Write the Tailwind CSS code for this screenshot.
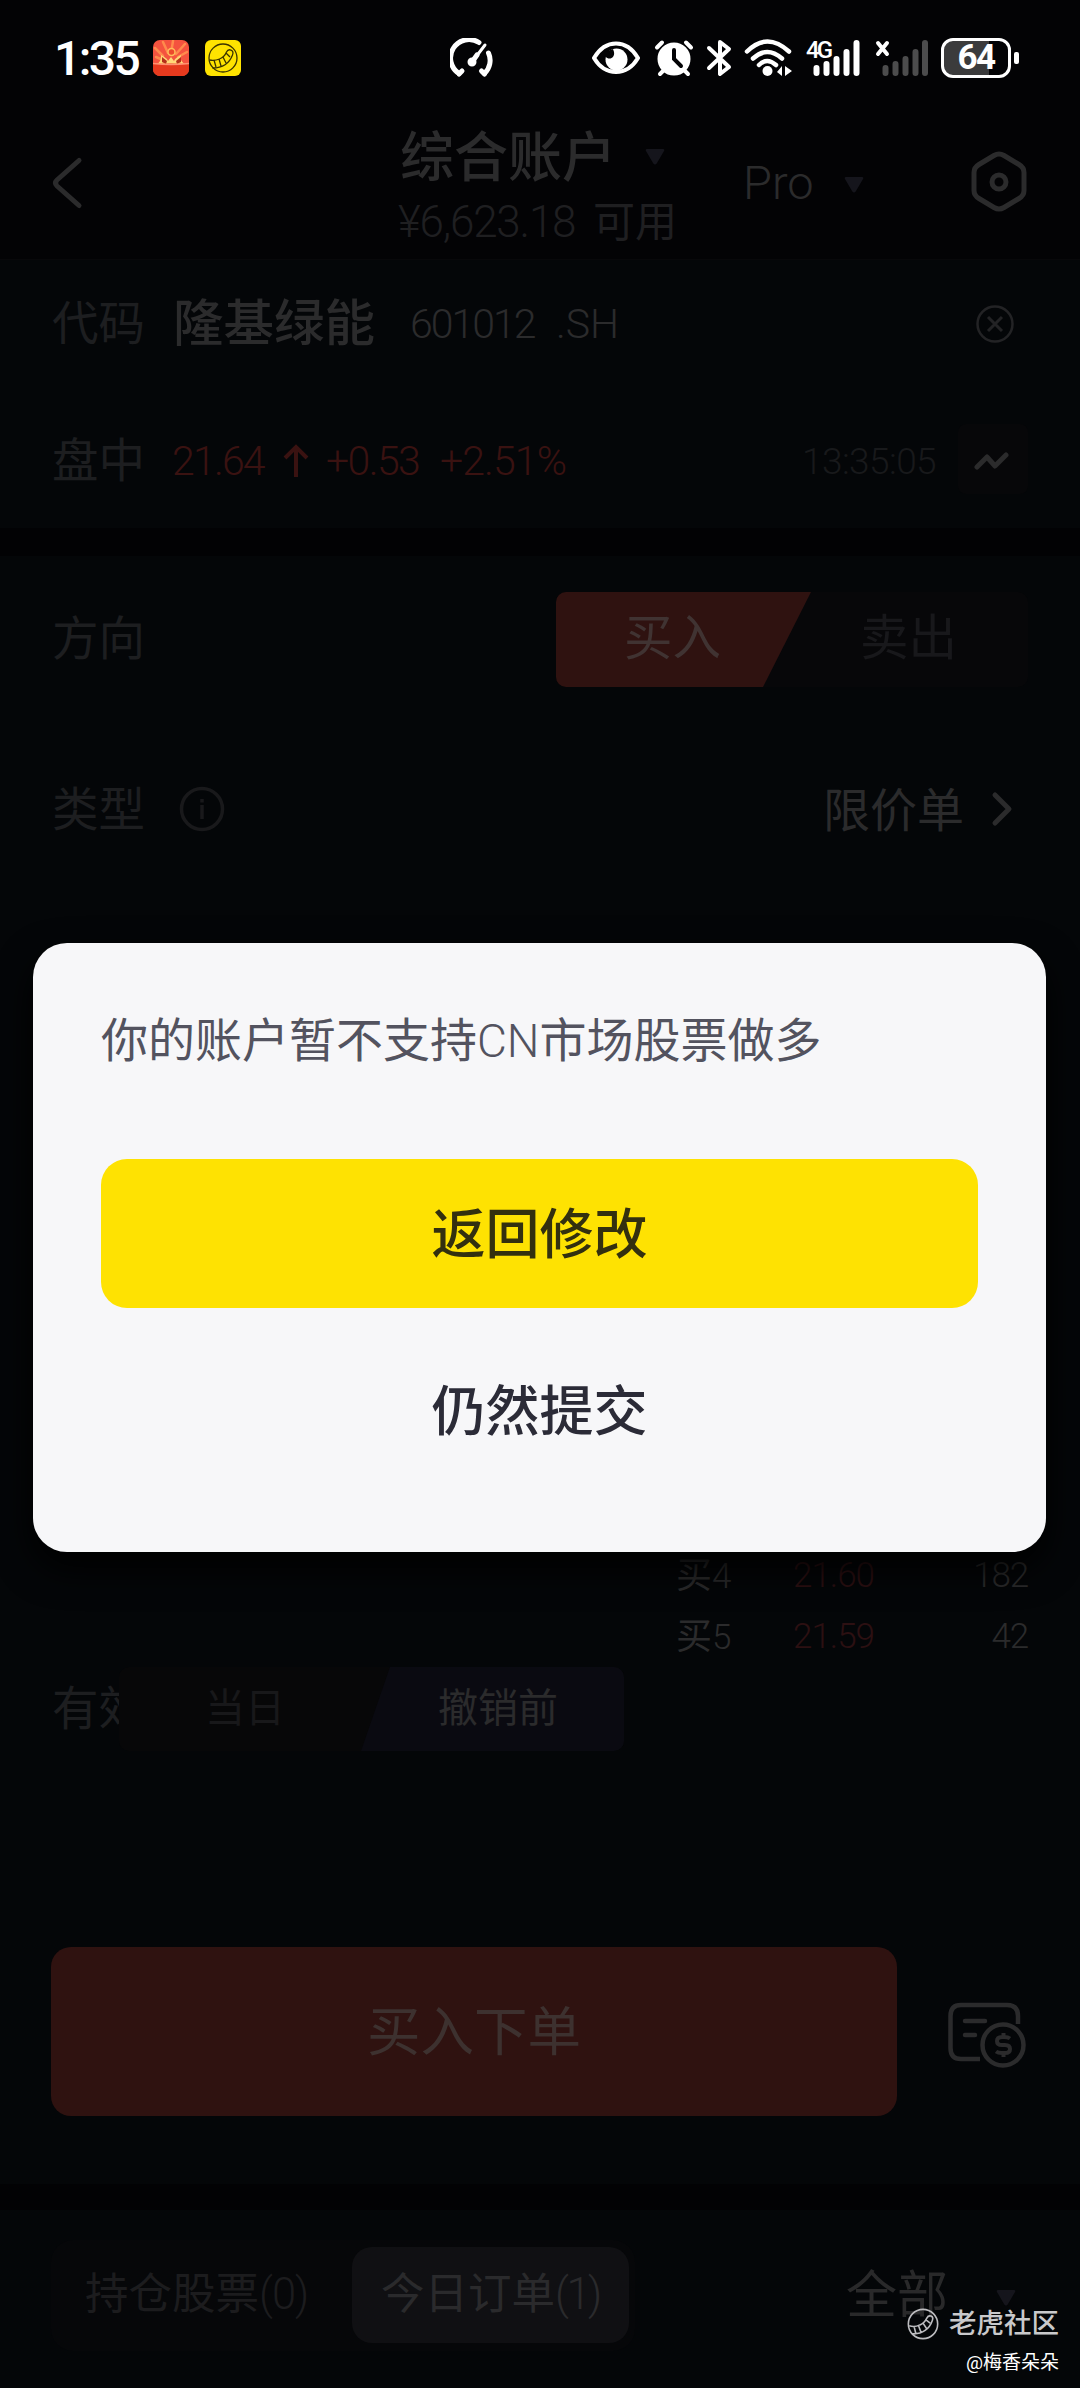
<!DOCTYPE html>
<html lang="zh-CN">
<head>
<meta charset="utf-8">
<title>下单</title>
<script src="https://cdn.jsdelivr.net/npm/@tailwindcss/browser@4"></script>
</head>
<body class="bg-[#040608]">
<div class="relative w-[1080px] h-[2388px] overflow-hidden bg-[#040608] font-[Roboto,'Noto_Sans_CJK_SC',sans-serif] leading-none whitespace-nowrap text-[#2b2b2c] flex flex-col">

  <!-- Status bar -->
  <div class="h-[115px] shrink-0 bg-[#030305] flex items-center text-white">
    <div class="w-[96px] ml-[54px] pt-[2px] text-[48px] font-medium tracking-[-2.600px]">1:35</div>
    <svg class="w-9 h-9 ml-[3px]" viewBox="0 0 36 36">
      <rect width="36" height="36" rx="7" fill="#f4533f"/>
      <path d="M2 8l8 8M10 2l5 11M20 1l-2 12M32 4l-9 10M34 12l-9 5M3 17l7 3" stroke="#ff8a4c" stroke-width="2.500" stroke-linecap="round"/>
      <path d="M3 24c4-1 5-4 5-9 3 2 6 3 7 6l3-4 3 4c1-3 4-4 7-6-1 5 1 8 5 9z" fill="#ffd878"/>
      <circle cx="18.500" cy="12" r="3.500" fill="#ec4a2c" stroke="#ffbd5c" stroke-width="1.500"/>
      <path d="M9 17l5 4-1 3-4-2zM28 17l-5 4 1 3 4-2z" fill="#b5301b"/>
      <path d="M0 24q18-1 36 0v5a7 7 0 0 1-7 7H7a7 7 0 0 1-7-7z" fill="#e63a1e"/>
      <path d="M0 23.500q18 2 36 0" stroke="#ff9070" stroke-width="1.500" fill="none"/>
    </svg>
    <svg class="w-9 h-9 ml-4" viewBox="0 0 36 36" fill="none" stroke="#3a3300" stroke-width="1.300">
      <rect width="36" height="36" rx="6" fill="#fee300" stroke="none"/>
      <circle cx="18" cy="18" r="14"/>
      <path d="M4.500 20q5 1 10-1 5-2 7-7c2-4 8-2 6 3-3 8-9 13-20 13M9 20l2 7M14 19l2 7M18 17l3 6M21 13l4 4"/>
    </svg>
    <svg class="w-[44px] h-[40px] ml-[209px]" viewBox="0 0 44 40" fill="none" stroke="#fff" stroke-width="5" stroke-linecap="round">
      <path d="M9 35.500a18 18 0 0 1 20-31M38.500 15a18 18 0 0 1-4 20.500" />
      <path d="M9 36l3-3M34.500 36l-3-3"/><path d="M22 24l13-17" stroke-width="3"/><path d="M22 24l5-7"/><circle cx="22" cy="24" r="2"/>
    </svg>
    <svg class="w-[48px] h-[34px] ml-[98px]" viewBox="0 0 48 34">
      <path d="M2 17C8 7 16 2.500 24 2.500S40 7 46 17C40 27 32 31 24 31S8 27 2 17z" fill="none" stroke="#fff" stroke-width="4"/>
      <circle cx="24.500" cy="18.500" r="11" fill="#fff"/><path d="M13 15c4 5 10 2 9-4l-1-3-8 3z" fill="#030305"/>
    </svg>
    <svg class="w-[40px] h-[38px] ml-[14px]" viewBox="0 0 40 38" fill="none" stroke="#fff" stroke-width="4" stroke-linecap="round">
      <circle cx="20" cy="20" r="14.500" fill="#fff"/><path d="M3 8.500l5-5M37 8.500l-5-5M6 35l5-5M34 35l-5-5"/><path d="M20 11v9l7 7" stroke="#030305"/>
    </svg>
    <svg class="w-[26px] h-[38px] ml-[12px]" viewBox="0 0 26 38" fill="none" stroke="#fff" stroke-width="4" stroke-linejoin="round" stroke-linecap="round">
      <path d="M3 9l20 19-9 7V3l9 7L3 29"/>
    </svg>
    <svg class="w-[48px] h-[38px] ml-[12px]" viewBox="0 0 48 38" fill="none" stroke="#fff" stroke-width="4.500" stroke-linecap="round">
      <path d="M3 12.500Q23 -7.500 45 12.500M9 19.500q14-13 29 0M15 26q8-8 17 0"/><circle cx="23.500" cy="32" r="5" fill="#fff" stroke="none"/>
      <path d="M38 27v10l-5-4zM41 27v10l7-5zM33 32h4M42 32h4" fill="#fff" stroke="none"/>
    </svg>
    <div class="relative w-[54px] h-[38px] ml-[14px]">
      <svg class="w-full h-full" viewBox="0 0 54 38" stroke="#fff" stroke-width="6" stroke-linecap="round"><path d="M10.500 29v5M20.500 25v9M30.500 20v14M40.500 13v21M50.500 4v30"/></svg>
      <span class="absolute left-0 -top-[1px] text-[24px] font-medium tracking-[-2.800px]">4G</span>
    </div>
    <svg class="w-[56px] h-[38px] ml-[14px]" viewBox="0 0 56 38" stroke="#4c4c4d" stroke-width="6" stroke-linecap="round"><path d="M11.500 29v5M21.500 25v9M31.500 20v14M41.500 13v21M51 4v30"/><path d="M4 4l9 11M13 4L4 15" stroke="#fff" stroke-width="4"/></svg>
    <div class="ml-[11px] w-[70px] h-[40px] rounded-[12px] border-[3px] border-white overflow-hidden bg-linear-to-r from-[#3b3b3c] from-[70%] to-[#030305] to-[70%] flex items-center justify-center text-[35px] font-bold tracking-[-1.500px]">64</div>
    <div class="ml-[3px] w-[5px] h-[12px] rounded-[2px] bg-white"></div>
  </div>

  <!-- Title bar -->
  <div class="h-[144px] shrink-0 bg-[#030305] flex">
    <svg class="w-[34px] h-[54px] mt-[41px] ml-[50px]" viewBox="0 0 34 54" fill="none" stroke="#2b2b2c" stroke-width="5" stroke-linecap="round" stroke-linejoin="round"><path d="M29 4.500L7 24q-3 3 0 6l22 19.500"/></svg>
    <div class="w-[330px] ml-[314px] pt-[17px]">
      <div class="flex items-center h-[52px]">
        <span class="w-[247px] pl-[2px] pt-[2px] text-[54px] font-medium">综合账户</span>
        <svg class="w-5 h-4 -mt-[3px]" viewBox="0 0 20 16"><path d="M2 0h16q2 0 1 2l-7 12q-2 3-4 0L1 2q-1-2 1-2z" fill="#15151c"/></svg>
      </div>
      <div class="mt-[16px] text-[42px] text-[#1f1f21] flex items-baseline"><span class="w-[195px] text-[44px] font-light tracking-[-1.200px]">¥6,623.18</span><span>可用</span></div>
    </div>
    <div class="ml-[15px] mt-[44px] w-[101px] text-[47px] font-light leading-[48px]">Pro</div>
    <svg class="w-5 h-4 mt-[62px]" viewBox="0 0 20 16"><path d="M2 0h16q2 0 1 2l-7 12q-2 3-4 0L1 2q-1-2 1-2z" fill="#15151c"/></svg>
    <svg class="w-[58px] h-[62px] mt-[36px] ml-[106px]" viewBox="0 0 58 62" fill="none" stroke="#2b2b2c" stroke-width="5"><path d="M24 4.500q5-3 10 0l15 9q5 3 5 8v18q0 5-5 8l-15 9q-5 3-10 0l-15-9q-5-3-5-8v-18q0-5 5-8z"/><circle cx="29" cy="31" r="7"/></svg>
  </div>
  <div class="h-[1px] shrink-0 bg-[#08080a]"></div>

  <!-- Quote -->
  <div class="h-[126px] shrink-0 flex items-center px-[52px] pt-[3px]">
    <span class="w-[121px] text-[46.500px] text-[#1d1e20]">代码</span>
    <span class="w-[237px] text-[50.500px] font-medium">隆基绿能</span>
    <span class="w-[146px] text-[41px] font-light tracking-[-2px]">601012</span>
    <span class="text-[41px] font-light">.SH</span>
    <svg class="w-[40px] h-[40px] ml-auto mr-[13px] -mt-[1px]" viewBox="0 0 40 40" fill="none" stroke="#232325" stroke-width="2.500"><circle cx="20" cy="20" r="17.500"/><path d="M13 13l14 14M27 13L13 27" stroke-width="3"/></svg>
  </div>
  <div class="h-[142px] shrink-0 flex items-center px-[52px] pt-[8px] text-[#3a1211]">
    <span class="w-[120px] text-[46.500px] text-[#1d1e20]">盘中</span>
    <span class="w-[110px] text-[41px] font-light tracking-[-1.800px]">21.64</span>
    <svg class="w-[28px] h-[34px]" viewBox="0 0 28 34" fill="none" stroke="#3a1211" stroke-width="4"><path d="M14 33V4M3 14L14 3l11 11"/></svg>
    <span class="w-[114px] ml-[16px] text-[41px] font-light tracking-[-1.600px]">+0.53</span>
    <span class="text-[41px] font-light tracking-[-0.900px]">+2.51%</span>
    <span class="ml-auto mr-[22px] text-[37px] font-light text-[#18191b] tracking-[-0.600px]">13:35:05</span>
    <span class="w-[70px] h-[70px] -mt-[4px] rounded-[8px] bg-[#070709] flex items-center justify-center"><svg class="w-[36px] h-[22px] -ml-[4px] mt-[3px]" viewBox="0 0 36 22" fill="none" stroke="#2b2b2c" stroke-width="5" stroke-linecap="round" stroke-linejoin="round"><path d="M4 17l10-10 8 9L33 5"/></svg></span>
  </div>

  <div class="h-[28px] shrink-0 bg-[#020204]"></div>

  <!-- Direction -->
  <div class="h-[167px] shrink-0 flex items-center justify-between px-[52px]">
    <span class="text-[46.500px] text-[#1d1e20]">方向</span>
    <div class="w-[472px] h-[95px] rounded-[10px] overflow-hidden bg-[#070709] flex text-[48.500px]">
      <div class="w-[255px] h-full pl-[68px] flex items-center bg-[#2f1210] text-[#403332] [clip-path:polygon(0_0,100%_0,207px_100%,0_100%)]">买入</div>
      <div class="pl-[49px] flex items-center text-[#18181b]">卖出</div>
    </div>
  </div>
  <!-- Order type -->
  <div class="h-[172px] shrink-0 flex items-center px-[52px]">
    <span class="w-[126px] pt-[2px] text-[46.500px] text-[#1d1e20]">类型</span>
    <svg class="w-[48px] h-[48px]" viewBox="0 0 48 48" fill="none" stroke="#19191b" stroke-width="3.500"><circle cx="24" cy="24" r="20.500"/><path d="M24 20v14M24 14v3.500"/></svg>
    <span class="ml-auto pt-[2px] text-[47px]">限价单</span>
    <svg class="w-[28px] h-[40px] ml-[25px] mr-[11px]" viewBox="0 0 28 40" fill="none" stroke="#2b2b2c" stroke-width="5" stroke-linecap="round" stroke-linejoin="round"><path d="M6 6l14 14L6 34"/></svg>
  </div>

  <!-- Order book -->
  <div class="h-[650px] shrink-0"></div>
  <div class="h-[61px] shrink-0 flex items-center pl-[676px] pr-[52px] text-[36px]">
    <span class="w-[117px]">买<span class="text-[35px] font-light">4</span></span><span class="text-[35px] font-light text-[#2c1012] tracking-[-1px]">21.60</span><span class="ml-auto text-[35px] font-light tracking-[-1.200px]">182</span>
  </div>
  <div class="h-[61px] shrink-0 flex items-center pl-[676px] pr-[52px] text-[36px]">
    <span class="w-[117px]">买<span class="text-[35px] font-light">5</span></span><span class="text-[35px] font-light text-[#2c1012] tracking-[-1px]">21.59</span><span class="ml-auto text-[35px] font-light tracking-[-1.200px]">42</span>
  </div>

  <!-- Time in force -->
  <div class="h-[84px] shrink-0 flex items-center pl-[52px]">
    <span class="w-[67px] overflow-hidden text-[46.500px] leading-[60px] text-[#1d1e20]">有效</span>
    <div class="w-[505px] h-full rounded-[10px] overflow-hidden bg-[#070708] flex text-[40px]">
      <div class="w-[242px] pl-[86px] flex items-center text-[#18181a]">当日</div>
      <div class="w-[263px] pl-[77px] flex items-center bg-[#0a0a11] [clip-path:polygon(29px_0,100%_0,100%_100%,0_100%)]">撤销前</div>
    </div>
  </div>

  <!-- Submit -->
  <div class="mt-[196px] h-[169px] shrink-0 flex items-center pl-[51px]">
    <div class="w-[846px] h-full pt-[2px] rounded-[20px] bg-[#2f1210] text-[#3d312f] text-[53.500px] flex items-center justify-center">买入下单</div>
    <svg class="w-[80px] h-[70px] ml-[50px] mt-[6px]" viewBox="0 0 80 70" fill="none" stroke="#2b2b2c" stroke-width="4.500">
      <path d="M71 24V16q0-11-11-11H14Q3.500 5 3.500 16v32q0 11 10.500 11H33"/><path d="M18 21h20M18 35h10" stroke-linecap="round"/><circle cx="56" cy="45" r="20.500"/>
      <path d="M63 38.500q-2-1.500-6-1.500h-2q-5 0-5 4t5 4h3q5 0 5 4t-5 4h-3q-4 0-6-1.500M56.500 33v4M56.500 53v4" stroke-width="4"/>
    </svg>
  </div>

  <div class="mt-[68px] h-[26px] shrink-0 bg-[#020204]"></div>

  <!-- Tabs -->
  <div class="mt-[30px] h-[111px] shrink-0 flex items-center pl-[51px]">
    <div class="w-[584px] h-full rounded-[22px] bg-[#060709] flex pt-[7px] text-[43.500px] text-[#1c1c1e]">
      <div class="w-[301px] h-[96px] pl-[34px] flex items-center">持仓股票<span class="font-light tracking-[-1px]">(0)</span></div>
      <div class="w-[277px] h-[96px] rounded-[20px] bg-[#101013] text-[#2a2a2c] pl-[29px] flex items-center">今日订单<span class="font-light tracking-[-2.500px]">(1)</span></div>
    </div>
    <span class="ml-[211px] w-[150px] text-[51px] text-[#29292a]">全部</span>
    <svg class="w-5 h-4 mt-[4px]" viewBox="0 0 20 16"><path d="M2 0h16q2 0 1 2l-7 12q-2 3-4 0L1 2q-1-2 1-2z" fill="#15151c"/></svg>
  </div>

  <!-- Dialog -->
  <div class="absolute left-[33px] top-[943px] w-[1013px] h-[609px] rounded-[34px] bg-[#f7f7f9] px-[68px] pt-[72px] shadow-[0_16px_36px_#000000]">
    <p class="text-[47px] leading-[52px] text-[#53535f]">你的账户暂不支持<span class="text-[46px] font-light">CN</span>市场股票做多</p>
    <div class="mt-[92px] h-[149px] pt-[4px] rounded-[26px] bg-[#fee202] text-[#33300f] text-[54px] font-medium flex items-center justify-center">返回修改</div>
    <div class="mt-[28px] h-[149px] pt-[4px] text-[#2b2b37] text-[54px] font-medium flex items-center justify-center">仍然提交</div>
  </div>

  <!-- Community signature -->
  <div class="absolute right-[21px] top-[2308px] flex flex-col items-end">
    <div class="flex items-center text-[#c9c9cb] text-[27.500px] font-medium">
      <svg class="w-8 h-8 mr-[10px]" viewBox="0 0 36 36" fill="none" stroke="#bdbdc0" stroke-width="1.800"><circle cx="18" cy="18" r="16.500"/><path d="M2.500 20q6 2 12-1 5-2 8-8c2-4 8-2 6 3-3 9-11 16-23 15M8 21l2 8M13 20l3 8M18 17l4 6M21 13l5 4"/></svg>老虎社区
    </div>
    <div class="mt-[13px] text-[19px] leading-[20px] text-white">@梅香朵朵</div>
  </div>
</div>
</body>
</html>
